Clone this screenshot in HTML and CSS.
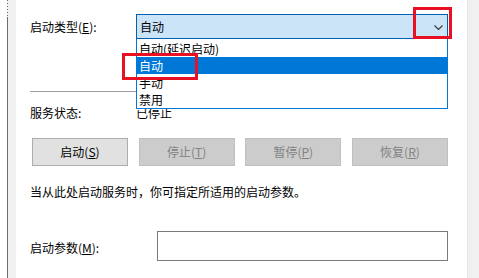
FILE: index.html
```html
<!DOCTYPE html>
<html lang="zh-CN">
<head>
<meta charset="utf-8">
<title>服务属性</title>
<link rel="stylesheet" href="styles.css">
</head>
<body>
<div class="window">
  <div class="left-edge"><div class="edge-line"></div><div class="edge-grey"></div></div>
  <div class="content">
    <div class="row type-row">
      <div class="label">启动类型(<u>E</u>):</div>
      <div class="combo-wrap">
        <div class="combo">
          <span>自动</span>
          <svg class="chev" width="9" height="5" viewBox="0 0 9 5"><path d="M0.5 0.5 L4.5 4.5 L8.5 0.5" fill="none" stroke="#3c3c3c" stroke-width="1.2"/></svg>
        </div>
        <ul class="list">
          <li>自动(延迟启动)</li>
          <li class="sel">自动</li>
          <li>手动</li>
          <li>禁用</li>
        </ul>
        <div class="mark mark-item"></div>
        <div class="mark mark-arrow"></div>
      </div>
    </div>
    <div class="sep"></div>
    <div class="row status-row">
      <div class="label">服务状态:</div>
      <div class="value">已停止</div>
    </div>
    <div class="buttons">
      <div class="btn">启动(<u>S</u>)</div>
      <div class="btn disabled">停止(<u>T</u>)</div>
      <div class="btn disabled">暂停(<u>P</u>)</div>
      <div class="btn disabled">恢复(<u>R</u>)</div>
    </div>
    <div class="desc">当从此处启动服务时，你可指定所适用的启动参数。</div>
    <div class="row param-row">
      <div class="label param-label">启动参数(<u>M</u>):</div>
      <div class="input"></div>
    </div>
  </div>
  <div class="right-edge"></div>
</div>
</body>
</html>
```
FILE: styles.css
```css
html, body {
  margin: 0;
  padding: 0;
  background: #ffffff;
}
body {
  font-family: "Noto Sans CJK SC", "Noto Sans", sans-serif;
  font-size: 12px;
  color: #000;
}
u { text-decoration: underline; text-underline-offset: 1px; }
.window {
  display: flex;
  width: 479px;
  height: 278px;
  overflow: hidden;
}
.left-edge {
  display: flex;
  width: 16px;
  padding-left: 7px;
  box-sizing: border-box;
}
.edge-line {
  width: 1px;
  background:
    linear-gradient(to bottom, transparent 0 17px, #6d6d6d 17px),
    repeating-linear-gradient(to bottom, #6d6d6d 0 1px, #f0f0f0 1px 3px);
  background-size: 1px 100%, 1px 17px;
  background-repeat: no-repeat;
}
.edge-grey {
  width: 8px;
  background: #f0f0f0;
}
.content {
  width: 452px;
  padding: 14px 0 0 14px;
  box-sizing: border-box;
}
.right-edge {
  width: 11px;
  background: #f0f0f0;
  border-left: 1px solid #e6e6e6;
}
.row {
  display: flex;
  align-items: center;
}
.label {
  width: 106px;
  line-height: 16px;
  flex: none;
}
.type-row { height: 25px; }
.combo-wrap {
  position: relative;
  width: 312px;
  height: 25px;
}
.combo {
  display: flex;
  align-items: center;
  justify-content: space-between;
  height: 25px;
  box-sizing: border-box;
  border: 1px solid #0060b0;
  background: #cce4f7;
  padding: 0 4px 0 3px;
  line-height: 16px;
}
.chev { display: block; margin-top: 1px; }
.list {
  position: absolute;
  left: 0;
  top: 25px;
  width: 312px;
  margin: 0;
  padding: 1px 0 0 0;
  box-sizing: border-box;
  list-style: none;
  background: #fff;
  border: 1px solid #0078d7;
  border-top: none;
}
.list li {
  height: 17px;
  line-height: 17px;
  padding-left: 2px;
}
.list li.sel {
  background: #0078d7;
  color: #fff;
}
.mark {
  position: absolute;
  border: 3px solid #e81123;
  box-sizing: border-box;
}
.mark-item {
  left: -14px;
  top: 39px;
  width: 76px;
  height: 27px;
}
.mark-arrow {
  left: 277px;
  top: -7px;
  width: 39px;
  height: 32px;
}
.sep {
  margin-top: 52px;
  width: 418px;
  height: 1px;
  background: #a0a0a0;
}
.status-row { margin-top: 13px; line-height: 16px; }
.buttons {
  display: flex;
  justify-content: space-between;
  width: 416px;
  margin: 17px 0 0 2px;
}
.btn {
  width: 96px;
  height: 28px;
  box-sizing: border-box;
  border: 1px solid #adadad;
  background: #e1e1e1;
  display: flex;
  align-items: center;
  justify-content: center;
  line-height: 16px;
}
.btn.disabled {
  background: #cccccc;
  border-color: #bfbfbf;
  color: #838383;
}
.desc {
  margin-top: 18px;
  line-height: 16px;
}
.param-row { margin-top: 31px; }
.param-label { margin-top: 4px; width: 127px; }
.input {
  width: 291px;
  height: 30px;
  box-sizing: border-box;
  border: 1px solid #7a7a7a;
  background: #fff;
}
```
